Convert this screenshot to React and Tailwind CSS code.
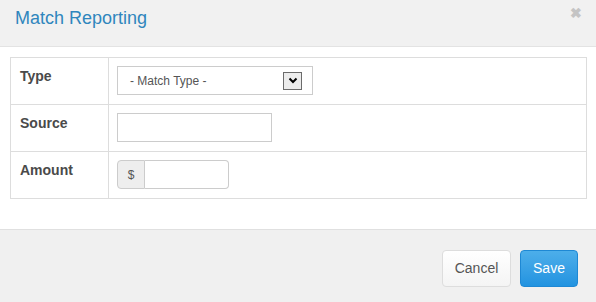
export default function App() {
  const font = { fontFamily: '"Liberation Sans", Arial, sans-serif' };
  const rows = [
    { label: 'Type', kind: 'select', cls: 'h-[46px]' },
    { label: 'Source', kind: 'input', cls: 'h-[47px] border-t border-[#dddddd]' },
    { label: 'Amount', kind: 'money', cls: 'h-[47px] border-t border-[#dddddd]' },
  ];
  return (
    <div className="w-[596px] h-[302px] bg-white flex flex-col" style={font}>
      <div className="h-[47px] bg-[#f1f1f1] border-b border-[#e3e3e3] flex items-start justify-between pl-[15px] pr-[14px]">
        <div className="text-[18px] leading-[20px] mt-[8px] text-[#2f86bd]">Match Reporting</div>
        <div className="text-[14px] leading-[15px] font-bold text-[#c4c4c4] mt-[6px]">&#x2716;&#xFE0E;</div>
      </div>
      <div className="h-[182px] pt-[10px] pl-[10px] pr-[9px]">
        <div className="border border-[#dddddd] flex flex-col">
          {rows.map((r) => (
            <div key={r.label} className={`flex ${r.cls}`}>
              <div className="w-[98px] border-r border-[#dddddd] pl-[9px] pt-[8px] text-[14px] leading-[20px] font-bold text-[#4a4a4a]">
                {r.label}
              </div>
              <div className="flex-1 pl-[8px] pt-[8px]">
                {r.kind === 'select' && (
                  <div className="w-[196px] h-[29px] border border-[#cccccc] bg-white flex items-center justify-between pl-[12px] pr-[10px]">
                    <span className="text-[12px] text-[#555555]">- Match Type -</span>
                    <div className="w-[19px] h-[18px] border border-[#6b6b6b] bg-[#ececec] flex items-center justify-center">
                      <svg width="10" height="7" viewBox="0 0 10 7">
                        <path d="M1.5 1.5 L5 5 L8.5 1.5" stroke="#000" strokeWidth="2" fill="none" />
                      </svg>
                    </div>
                  </div>
                )}
                {r.kind === 'input' && (
                  <div className="w-[155px] h-[29px] border border-[#cccccc] bg-white" />
                )}
                {r.kind === 'money' && (
                  <div className="flex h-[29px]">
                    <div className="w-[28px] bg-[#eeeeee] border border-[#cccccc] rounded-l-[4px] flex items-center justify-center text-[12px] text-[#555555]">$</div>
                    <div className="w-[84px] border border-l-0 border-[#cccccc] rounded-r-[4px] bg-white" />
                  </div>
                )}
              </div>
            </div>
          ))}
        </div>
      </div>
      <div className="flex-1 bg-[#f0f0f0] border-t border-[#e0e0e0] flex justify-end items-start pt-[20px] pr-[18px] gap-[9px]">
        <button className="w-[69px] h-[37px] rounded-[4px] border border-[#dddddd] bg-gradient-to-b from-white to-[#f4f4f4] text-[14px] text-[#555555]">Cancel</button>
        <button className="w-[58px] h-[37px] rounded-[4px] border border-[#1e88d4] bg-gradient-to-b from-[#4caeea] to-[#2193e0] text-[14px] text-white">Save</button>
      </div>
    </div>
  );
}
